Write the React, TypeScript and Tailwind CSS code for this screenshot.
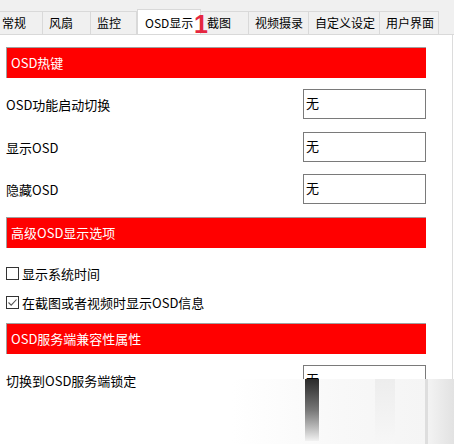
const TABS = [
  { label: "常规", w: "w-[47px] -ml-[4px]" },
  { label: "风扇", w: "w-[48px]" },
  { label: "监控", w: "w-[46px]" },
  { label: "OSD显示", w: "w-[64px]", active: true },
  { label: "截图", w: "w-[48px]" },
  { label: "视频摄录", w: "w-[60px]" },
  { label: "自定义设定", w: "w-[71px]" },
  { label: "用户界面", w: "w-[59px]" },
];

function Tab({ label, w, active }: { label: string; w: string; active?: boolean }) {
  return active ? (
    <div className={`${w} relative -mb-px flex h-[26px] shrink-0 items-center border-x border-t border-[#d9d9d9] bg-white pl-[7px] text-[12px] text-black`}>
      {label}
    </div>
  ) : (
    <div className={`${w} flex h-[23px] shrink-0 items-center border-t border-r border-[#d9d9d9] bg-[#f0f0f0] pl-[6px] text-[12px] text-black`}>
      {label}
    </div>
  );
}

function Header({ title, mt }: { title: string; mt: string }) {
  return (
    <div className={`${mt} flex h-[31px] w-[420px] items-center border-t border-l border-[#a0a0a0] bg-[#ff0000] pl-[4px] text-[13px] text-white`}>
      {title}
    </div>
  );
}

function Row({ label, mt }: { label: string; mt: string }) {
  return (
    <div className={`${mt} flex h-[30px] w-[420px] items-center justify-between`}>
      <span className="pt-[2px] text-[13px] text-black">{label}</span>
      <div className="h-[30px] w-[123px] border border-[#7a7a7a] bg-white pl-[2px] pt-[5px] text-[13px] leading-[16px] text-black">
        无
      </div>
    </div>
  );
}

function Check({ label, checked, mt }: { label: string; checked?: boolean; mt: string }) {
  return (
    <div className={`${mt} flex h-[13px] items-center gap-[3px]`}>
      <div className="flex h-[13px] w-[13px] items-center justify-center border border-[#333333] bg-white">
        {checked && (
          <svg width="11" height="11" viewBox="0 0 11 11">
            <path d="M1.5 5.5 L4.2 8.2 L9.5 2.5" fill="none" stroke="#555555" strokeWidth="1.1" />
          </svg>
        )}
      </div>
      <span className="text-[13px] leading-[16px] text-black">{label}</span>
    </div>
  );
}

export default function App() {
  return (
    <div className="relative h-[444px] w-[454px] overflow-hidden bg-white font-['Noto_Sans_CJK_SC','Microsoft_YaHei',sans-serif]">
      <div className="flex h-[35px] items-end overflow-hidden border-b border-[#d9d9d9] bg-[#f0f0f0]">
        {TABS.map((t) => (
          <Tab key={t.label} {...t} />
        ))}
      </div>
      {/* red annotation mark */}
      <span className="absolute left-[194px] top-[10px] font-['Liberation_Sans',sans-serif] text-[25px] font-bold leading-[28px] text-[#e5263f]">
        1
      </span>

      <div className="flex h-[409px] w-[453px] flex-col border-r border-[#dcdcdc] px-[6px]">
        <Header title="OSD热键" mt="mt-[12px]" />
        <Row label="OSD功能启动切换" mt="mt-[11px]" />
        <Row label="显示OSD" mt="mt-[13px]" />
        <Row label="隐藏OSD" mt="mt-[12px]" />
        <Header title="高级OSD显示选项" mt="mt-[13px]" />
        <Check label="显示系统时间" mt="mt-[19px]" />
        <Check label="在截图或者视频时显示OSD信息" checked mt="mt-[16px]" />
        <Header title="OSD服务端兼容性属性" mt="mt-[14px]" />
        <Row label="切换到OSD服务端锁定" mt="mt-[11px]" />
      </div>

      {/* smeared fade over the bottom right */}
      <div className="absolute left-[232px] top-[379px] h-[65px] w-[222px] bg-gradient-to-r from-white via-[#f8f8f8] to-[#f4f4f4]">
        <div className="absolute left-[73px] top-0 h-[62px] w-[14px] bg-gradient-to-b from-[#2b2b2b] via-[#777777] to-[#f2f2f2]" />
        <div className="absolute left-[143px] top-0 h-[65px] w-[20px] bg-gradient-to-b from-[#ededed] to-[#f7f7f7]" />
        <div className="absolute left-[193px] top-0 h-[65px] w-[3px] bg-[#dedede]" />
        <div className="absolute left-[196px] top-0 h-[65px] w-[26px] bg-gradient-to-r from-[#f3f3f3] to-[#e2e2e2]" />
      </div>
    </div>
  );
}
